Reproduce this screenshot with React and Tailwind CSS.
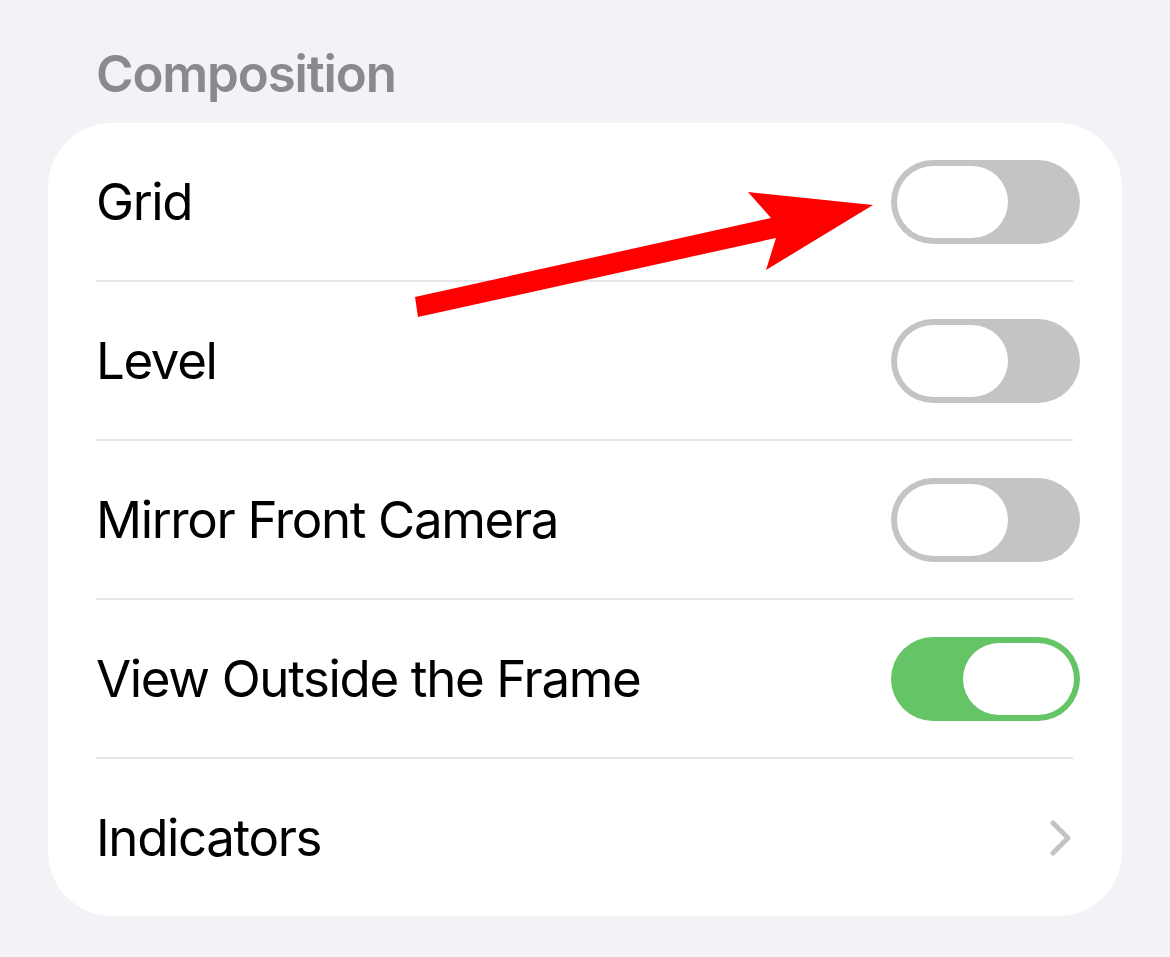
import React from "react";

function Toggle({ on }) {
  return (
    <div
      className={
        "w-[189px] h-[84px] rounded-full p-[6px] flex " +
        (on ? "bg-[#65c466] justify-end" : "bg-[#c4c4c6] justify-start")
      }
    >
      <div className="w-[111px] h-[72px] rounded-full bg-white" />
    </div>
  );
}

function Row({ label, children, pr }) {
  return (
    <div className={"h-[157px] flex items-center justify-between pl-[48px] " + pr}>
      <span className="text-[51px] leading-none tracking-[-1.35px] text-black">{label}</span>
      {children}
    </div>
  );
}

function Sep() {
  return <div className="h-[2px] bg-[#e6e6ea] ml-[48px] mr-[49px]" />;
}

export default function App() {
  return (
    <div
      className="relative min-h-screen w-[1170px] h-[957px] bg-[#f2f2f7] px-[48px] overflow-hidden"
      style={{ fontFamily: "Inter, 'Noto Sans', sans-serif" }}
    >
      <div className="h-[123px] pl-[48px] pt-[48px]">
        <span className="text-[51px] leading-none font-semibold tracking-[-1.15px] text-[#8a8a8e]">
          Composition
        </span>
      </div>
      <div className="bg-white rounded-[64px] flex flex-col">
        <Row label="Grid" pr="pr-[42px]">
          <Toggle on={false} />
        </Row>
        <Sep />
        <Row label="Level" pr="pr-[42px]">
          <Toggle on={false} />
        </Row>
        <Sep />
        <Row label="Mirror Front Camera" pr="pr-[42px]">
          <Toggle on={false} />
        </Row>
        <Sep />
        <Row label="View Outside the Frame" pr="pr-[42px]">
          <Toggle on={true} />
        </Row>
        <Sep />
        <Row label="Indicators" pr="pr-[50px]">
          <svg width="22" height="36" viewBox="0 0 22 36">
            <polyline
              points="3,3 18,18 3,33"
              fill="none"
              stroke="#c4c4c7"
              strokeWidth="5"
              strokeLinecap="round"
              strokeLinejoin="round"
            />
          </svg>
        </Row>
      </div>
      <svg
        className="absolute left-0 top-0 pointer-events-none"
        width="1170"
        height="957"
        viewBox="0 0 1170 957"
      >
        <polygon
          points="415,297 771,218 748,192 873,205 766,270 776,238 418,317"
          fill="#ff0000"
        />
      </svg>
    </div>
  );
}
